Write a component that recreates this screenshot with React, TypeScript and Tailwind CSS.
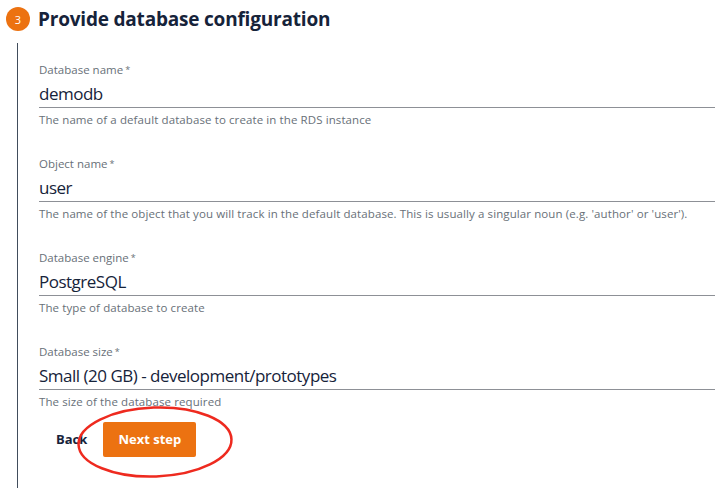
import React from "react";

const fields = [
  { label: "Database name", value: "demodb", desc: "The name of a default database to create in the RDS instance" },
  { label: "Object name", value: "user", desc: "The name of the object that you will track in the default database. This is usually a singular noun (e.g. 'author' or 'user')." },
  { label: "Database engine", value: "PostgreSQL", desc: "The type of database to create" },
  { label: "Database size", value: "Small (20 GB) - development/prototypes", desc: "The size of the database required" },
];

export default function App() {
  return (
    <div className="w-[715px] h-[488px] overflow-hidden bg-white font-['Open_Sans',sans-serif]">
      <div className="flex items-center gap-[8px] pl-[6px] pt-[2px] h-[36px]">
        <div className="w-[24px] h-[24px] rounded-full bg-[#ec7211] flex items-center justify-center text-white text-[11px] leading-none">3</div>
        <h1 className="text-[19px] font-bold text-[#16233a] leading-[24px] tracking-[-0.2px]">Provide database configuration</h1>
      </div>
      <div className="ml-[17px] mt-[7px] border-l border-[#414d5c] h-[445px] pl-[21px] pt-[19px]">
        <div className="flex flex-col gap-[29px]">
          {fields.map((f) => (
            <div key={f.label} className="flex flex-col">
              <div className="text-[11.5px] leading-[16px] text-[#687078]">
                {f.label}<span className="text-[9px] align-top ml-[2px]">*</span>
              </div>
              <div className="mt-[4px] text-[17px] leading-[24px] tracking-[-0.5px] text-[#16233a] border-b border-[#8d9096] pb-[1px]">{f.value}</div>
              <div className="mt-[5px] text-[11.5px] leading-[14px] tracking-[0.1px] text-[#687078]">{f.desc}</div>
            </div>
          ))}
        </div>
        <div className="relative flex items-center mt-[13px] h-[35px]">
          <button className="ml-[17px] text-[13px] font-bold text-[#16233a]">Back</button>
          <button className="ml-[16px] w-[93px] h-[35px] rounded-[2px] bg-[#ec7211] text-white text-[13px] font-bold">Next step</button>
          <svg className="absolute left-[37px] top-[-17px]" width="158" height="74" viewBox="0 0 158 74">
            <ellipse cx="79" cy="37" rx="76.5" ry="34.5" fill="none" stroke="#ee2a1f" strokeWidth="2.5" transform="rotate(-2 79 37)" />
          </svg>
        </div>
      </div>
    </div>
  );
}
